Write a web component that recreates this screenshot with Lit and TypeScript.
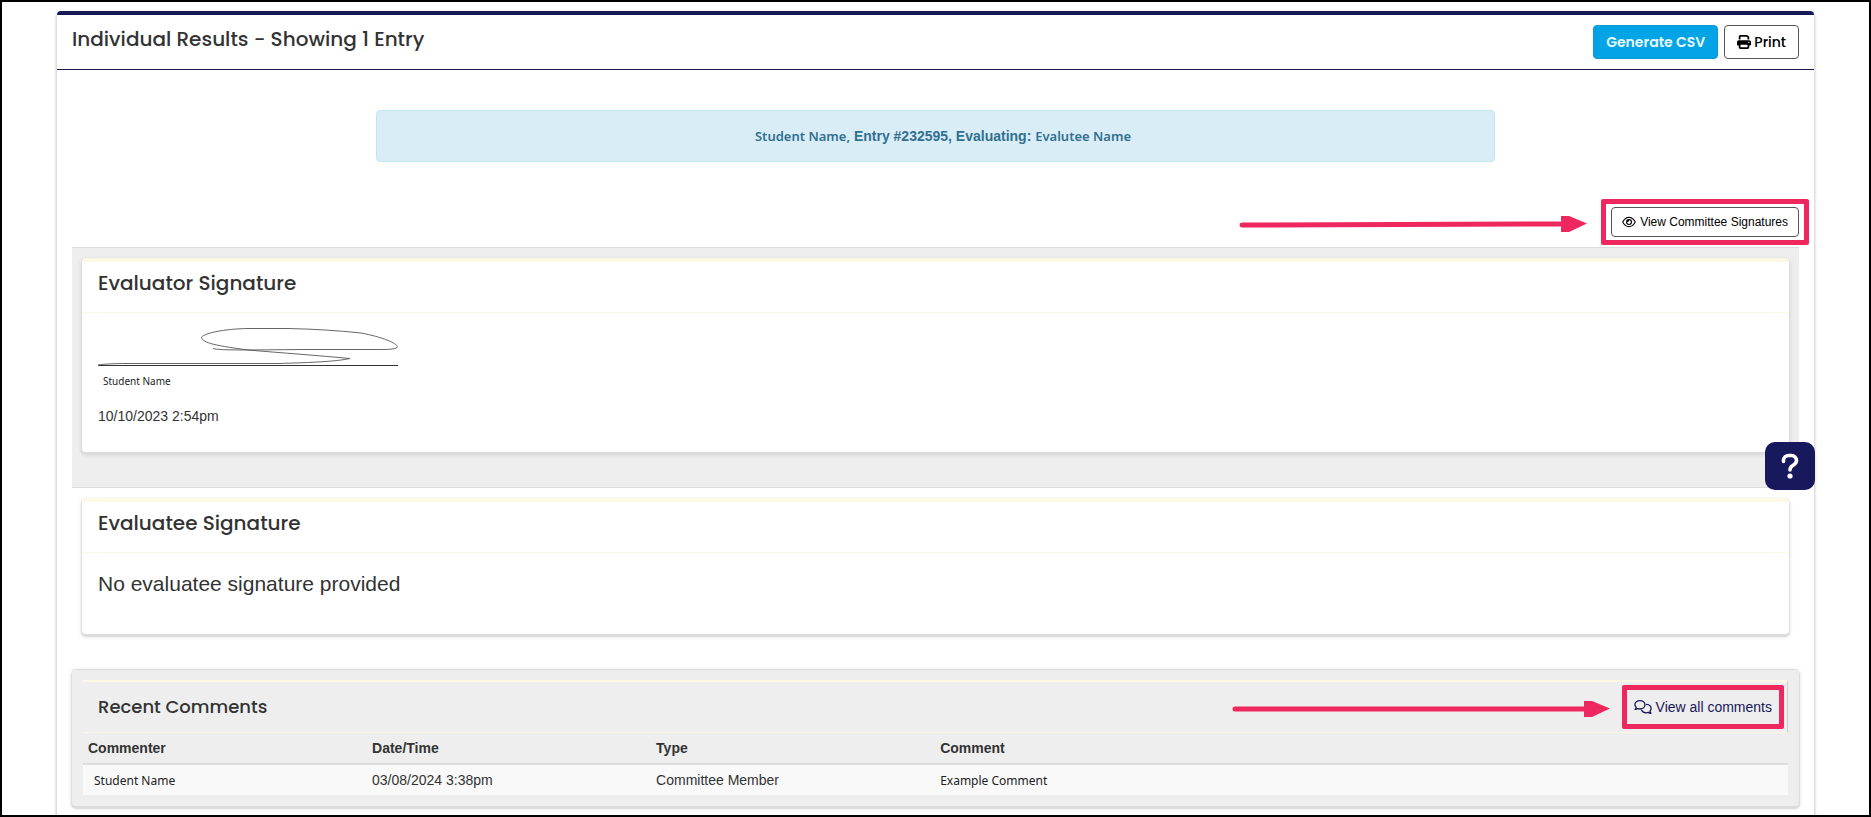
import { LitElement, html, css, svg } from "lit";
import { customElement } from "lit/decorators.js";

const printIcon = html`<svg class="icon icon-print" viewBox="0 0 512 512" aria-hidden="true">
  <path fill="currentColor" d="M128 0C92.7 0 64 28.7 64 64v96h64V64H354.7L384 93.3V160h64V93.3c0-17-6.7-33.3-18.7-45.3L400 18.7C388 6.7 371.7 0 354.7 0H128zM384 352v32 64H128V384 368 352H384zm64 32h32c17.7 0 32-14.3 32-32V256c0-35.3-28.7-64-64-64H64c-35.3 0-64 28.7-64 64v96c0 17.7 14.3 32 32 32H64v64c0 35.3 28.7 64 64 64H384c35.3 0 64-28.7 64-64V384zM432 248a24 24 0 1 1 0 48 24 24 0 1 1 0-48z"/>
</svg>`;

const eyeIcon = html`<svg class="icon icon-eye" viewBox="0 0 576 512" aria-hidden="true">
  <path fill="currentColor" d="M288 80c-65.2 0-118.8 29.6-159.9 67.7C89.6 183.5 63 226 49.4 256c13.6 30 40.2 72.5 78.6 108.3C169.2 402.4 222.8 432 288 432s118.8-29.6 159.9-67.7C486.4 328.5 513 286 526.6 256c-13.6-30-40.2-72.5-78.6-108.3C406.8 109.6 353.2 80 288 80zM95.4 112.6C142.5 68.8 207.2 32 288 32s145.5 36.8 192.6 80.6c46.8 43.5 78.1 95.4 93 131.1c3.3 7.9 3.3 16.7 0 24.6c-14.9 35.7-46.2 87.7-93 131.1C433.5 443.2 368.8 480 288 480s-145.5-36.8-192.6-80.6C48.6 356 17.3 304 2.5 268.3c-3.3-7.9-3.3-16.7 0-24.6C17.3 208 48.6 156 95.4 112.6zM288 336c44.2 0 80-35.8 80-80s-35.8-80-80-80c-.7 0-1.3 0-2 0c1.3 5.1 2 10.5 2 16c0 35.3-28.7 64-64 64c-5.5 0-10.9-.7-16-2c0 .7 0 1.3 0 2c0 44.2 35.8 80 80 80zm0-208a128 128 0 1 1 0 256 128 128 0 1 1 0-256z"/>
</svg>`;

const commentsIcon = html`<svg class="icon icon-comments" viewBox="0 0 640 512" aria-hidden="true">
  <g fill="none" stroke="currentColor" stroke-width="48" stroke-linejoin="round" stroke-linecap="round">
    <path d="M208 24c102 0 184 68 184 152s-82 152-184 152c-28 0-56-6-80-15c-26 18-60 31-98 33c18-22 34-46 40-78C42 242 24 210 24 176C24 92 106 24 208 24z"/>
    <path d="M447 162c97 9 169 72 169 158c0 35-17 66-44 90c6 30 20 54 38 76c-38-2-70-15-96-33c-24 9-50 15-78 15c-76 0-140-38-168-92"/>
  </g>
</svg>`;

interface CommentRow {
  commenter: string;
  date: string;
  type: string;
  comment: string;
}

@customElement("app-root")
export class AppRoot extends LitElement {
  private comments: CommentRow[] = [
    {
      commenter: "Student Name",
      date: "03/08/2024 3:38pm",
      type: "Committee Member",
      comment: "Example Comment",
    },
  ];

  static styles = css`
    :host {
      display: block;
      box-sizing: border-box;
      height: 100vh;
      overflow: hidden;
      padding: 9px 55px 0;
      border: 2px solid #000;
      background: #fff;
      color: #333;
      font: 14px/20px "Liberation Sans", Arial, sans-serif;
      --heading: Poppins, Inter, sans-serif;
      --navy: #18185a;
      --cream: #fcf8e3;
      --mark: #ee275f;
      --lift: 0 2px 1px 1px #dcdcdc, 0 2px 4px 1px rgba(0, 0, 0, 0.1);
    }
    *, *::before, *::after { box-sizing: border-box; }
    h1, h2, p { margin: 0; }
    h1, h2 {
      font-family: var(--heading);
      font-weight: 500;
      font-size: 20px;
      line-height: 22px;
    }
    a { color: var(--navy); text-decoration: none; }
    .icon { display: block; flex: none; }
    .panel {
      min-height: 100%;
      border-top: 4px solid #171955;
      border-radius: 4px 4px 0 0;
      box-shadow: 0 2px 3px 1px rgba(0, 0, 0, 0.2);
    }
    .panel-head {
      display: flex;
      justify-content: space-between;
      align-items: flex-start;
      padding: 10px 15px;
      border-bottom: 1px solid #171955;
    }
    .panel-head h1 { line-height: 28px; }
    .tools { display: flex; gap: 6px; }
    .btn {
      display: flex;
      align-items: center;
      justify-content: center;
      gap: 3px;
      height: 34px;
      padding: 0 12px;
      border: 1px solid #555;
      border-radius: 4px;
      background: #fff;
      color: #000;
      font: 500 14px/20px var(--heading);
    }
    .btn-primary { background: #03a4e5; border-color: #0a98d2; color: #e9fbff; font-weight: 600; }
    .btn-small { gap: 4px; height: 30px; padding: 0 10px; font: 12px/18px "Liberation Sans", Arial, sans-serif; }
    .icon-print { width: 14px; height: 14px; }
    .icon-eye { width: 14px; height: 12px; }
    .icon-comments { width: 18px; height: 14px; }
    .panel-body { padding: 40px 15px 0; }
    .notice {
      width: 64.75%;
      margin: 0 auto 45px;
      padding: 15px 15px 15px 30px;
      border: 1px solid #bce8f1;
      border-radius: 4px;
      background: #d9edf7;
      color: #31708f;
      font-weight: 700;
      text-align: center;
    }
    .person { font-family: "Noto Sans", sans-serif; }
    .notice .person { font-size: 13px; font-weight: 600; }
    .actions { display: flex; justify-content: flex-end; padding-bottom: 10px; }
    .marked { position: relative; }
    .marked::after {
      content: "";
      position: absolute;
      inset: -8px -10px;
      border: 5px solid var(--mark);
      border-radius: 2px;
      pointer-events: none;
    }
    .marked-link::after { inset: -8px -12px; }
    .arrow { position: absolute; right: calc(100% + 24px); top: calc(50% - 6px); }
    .band { padding: 10px 10px 35px; }
    .band-gray { background: #eee; border-top: 1px solid #ddd; border-bottom: 1px solid #ddd; }
    .card {
      border-top: 4px solid var(--cream);
      border-radius: 4px;
      background: #fff;
      box-shadow: var(--lift);
    }
    .card-head { padding: 10px 16px 18px; border-bottom: 1px solid var(--cream); }
    .card-body { padding: 15px 16px 26px; }
    .card-body-empty { padding: 20px 16px 39px; font-size: 21px; line-height: 22px; }
    .signature { display: block; width: 300px; height: 38px; }
    .signer { padding: 5px 5px 15px; font-family: "Noto Sans", sans-serif; font-size: 10px; color: #222; }
    .comments {
      padding: 10px 11px 11px;
      border-top: 1px solid #ddd;
      border-radius: 4px;
      background: #eee;
      box-shadow: var(--lift);
    }
    .comments-head {
      display: flex;
      align-items: center;
      justify-content: space-between;
      height: 53px;
      padding: 0 15px;
      border-top: 2px solid var(--cream);
      border-bottom: 1px solid var(--cream);
      border-right: 1px solid #ccc;
    }
    .comments-head h2 { font-size: 18px; }
    .comments-link { display: flex; align-items: center; gap: 4px; height: 28px; }
    table { width: 100%; table-layout: fixed; border-collapse: collapse; text-align: left; }
    th, td { height: 30px; padding: 0 5px; }
    .col { width: 16.66%; }
    thead tr { height: 31px; border-bottom: 2px solid #ddd; }
    tbody tr { height: 31px; background: #f9f9f9; }
    td .person { font-size: 12px; font-weight: 400; color: #222; }
    td:first-child { padding-left: 11px; }
    .help {
      position: fixed;
      right: 56px;
      top: 442px;
      width: 50px;
      height: 48px;
      padding: 0;
      border: 0;
      border-radius: 10px;
      background: #18185c;
      color: #fff;
    }
    .help svg { display: block; margin: auto; width: 18px; height: 26px; }
  `;

  private arrow(width: number, tilt: number) {
    return html`<svg class="arrow" width=${width} height="16" viewBox="0 0 ${width} 16" aria-hidden="true">
      ${svg`<path d="M3 ${8 + tilt}L${width - 24} 8" stroke="#ee275f" stroke-width="5" stroke-linecap="round"/>
      <path d="M${width - 26} 0h8L${width} 7.500L${width - 18} 16h-8z" fill="#ee275f"/>`}
    </svg>`;
  }

  render() {
    return html`
      <main class="panel">
        <header class="panel-head">
          <h1>Individual Results - Showing 1 Entry</h1>
          <div class="tools">
            <button class="btn btn-primary" type="button">Generate CSV</button>
            <button class="btn" type="button">${printIcon}Print</button>
          </div>
        </header>
        <div class="panel-body">
          <p class="notice" role="status"><span class="person">Student Name,</span> Entry #232595, Evaluating: <span class="person">Evalutee Name</span></p>
          <div class="actions">
            <div class="marked">
              ${this.arrow(348, 1)}
              <button class="btn btn-small" type="button">${eyeIcon}View Committee Signatures</button>
            </div>
          </div>
          <section class="band band-gray">
            <div class="card">
              <header class="card-head"><h2>Evaluator Signature</h2></header>
              <div class="card-body">
                <svg class="signature" viewBox="0 0 300 38" role="img" aria-label="Signature">
                  <path d="M0 37.500H300" stroke="#333" stroke-width="1"/>
                  <path d="M115 20.500C122 22.500 150 22 205 21.500H285C293 21.500 299 20.500 299.500 19C299 15 284 9 263 5C240 2.500 215 1 190 .5H150C125 1 108 5 103.500 9C104 14 112 17 150 22C185 25 220 27.500 252 30.500C238 33.500 215 34.500 180 35.500H30C15 35.500 6 36 0 37" fill="none" stroke="#555" stroke-width="0.900"/>
                </svg>
                <p class="signer">Student Name</p>
                <time datetime="2023-10-10T14:54">10/10/2023 2:54pm</time>
              </div>
            </div>
          </section>
          <section class="band">
            <div class="card">
              <header class="card-head"><h2>Evaluatee Signature</h2></header>
              <p class="card-body-empty">No evaluatee signature provided</p>
            </div>
          </section>
          <section class="comments">
            <header class="comments-head">
              <h2>Recent Comments</h2>
              <div class="marked marked-link">
                ${this.arrow(378, 0)}
                <a class="comments-link" href="#comments">${commentsIcon}View all comments</a>
              </div>
            </header>
            <table>
              <thead>
                <tr>
                  <th class="col" scope="col">Commenter</th>
                  <th class="col" scope="col">Date/Time</th>
                  <th class="col" scope="col">Type</th>
                  <th scope="col">Comment</th>
                </tr>
              </thead>
              <tbody>
                ${this.comments.map(
                  (row) => html`<tr>
                    <td><span class="person">${row.commenter}</span></td>
                    <td>${row.date}</td>
                    <td>${row.type}</td>
                    <td><span class="person">${row.comment}</span></td>
                  </tr>`
                )}
              </tbody>
            </table>
          </section>
        </div>
      </main>
      <button class="help" type="button" aria-label="Help">
        <svg viewBox="0 0 18 26" aria-hidden="true">
          <path d="M2.500 8.500V7A5 5 0 0 1 7.500 2.500H10.500A5 5 0 0 1 15.500 7.500C15.500 10.500 13.500 11.500 11.500 12.700C9.500 13.900 9 14.500 9 17" fill="none" stroke="#fff" stroke-width="3.600" stroke-linecap="round"/>
          <circle cx="9" cy="23" r="2.600" fill="#fff"/>
        </svg>
      </button>
    `;
  }
}
